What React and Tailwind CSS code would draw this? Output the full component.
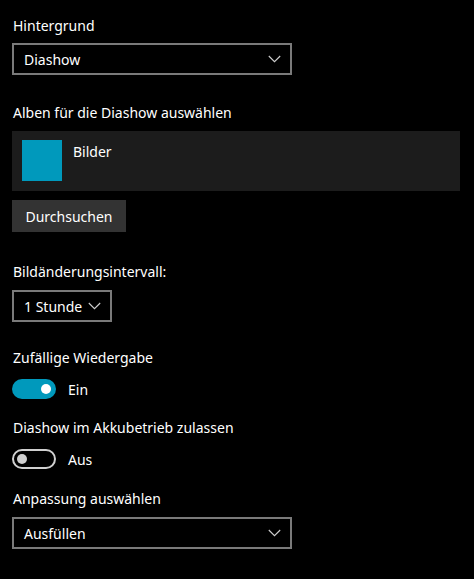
import React from 'react';

const Chevron = () => (
  <svg width="13" height="8" viewBox="0 0 13 8" fill="none" stroke="#cfcfcf" strokeWidth="1.1">
    <path d="M0.8 1l5.7 5.7L12.2 1" />
  </svg>
);

const Dropdown = ({ value, width }) => (
  <div className={`flex items-center justify-between h-[32px] border-2 border-[#7a7a7a] pl-[10px] pr-[9px] ${width}`}>
    <span className="text-[14px] text-white">{value}</span>
    <Chevron />
  </div>
);

const Toggle = ({ on, label }) => (
  <div className="flex items-center h-[20px]">
    {on ? (
      <div className="w-[44px] h-[20px] rounded-full bg-[#0099bc] flex items-center justify-end pr-[5px]">
        <div className="w-[10px] h-[10px] rounded-full bg-white" />
      </div>
    ) : (
      <div className="w-[44px] h-[20px] rounded-full border-2 border-[#d0d0d0] flex items-center pl-[3px]">
        <div className="w-[10px] h-[10px] rounded-full bg-[#d0d0d0]" />
      </div>
    )}
    <span className="ml-[12px] text-[14px] text-white">{label}</span>
  </div>
);

export default function App() {
  return (
    <div
      className="w-[474px] h-[579px] bg-black text-white px-[12px] pt-[16px] overflow-hidden"
      style={{ fontFamily: '"Noto Sans", "Open Sans", sans-serif' }}
    >
      <div className="text-[14px] leading-[20px] pl-[1px]">Hintergrund</div>
      <div className="mt-[7px]">
        <Dropdown value="Diashow" width="w-[280px]" />
      </div>

      <div className="mt-[28px] text-[14px] leading-[20px] pl-[1px]">Alben für die Diashow auswählen</div>
      <div className="mt-[8px] h-[60px] w-[448px] bg-[#1c1c1c] flex items-start pl-[10px] pt-[9px]">
        <div className="w-[40px] h-[41px] bg-[#0099bc]" />
        <span className="ml-[11px] text-[14px] leading-[20px] mt-[2px]">Bilder</span>
      </div>
      <button className="mt-[9px] h-[32px] w-[114px] bg-[#333333] text-[14px] text-white flex items-center justify-center">
        Durchsuchen
      </button>

      <div className="mt-[30px] text-[14px] leading-[20px] pl-[1px]">Bildänderungsintervall:</div>
      <div className="mt-[8px]">
        <Dropdown value="1 Stunde" width="w-[100px]" />
      </div>

      <div className="mt-[26px] text-[14px] leading-[20px] pl-[1px]">Zufällige Wiedergabe</div>
      <div className="mt-[11px]">
        <Toggle on label="Ein" />
      </div>

      <div className="mt-[19px] text-[14px] leading-[20px] pl-[1px]">Diashow im Akkubetrieb zulassen</div>
      <div className="mt-[11px]">
        <Toggle on={false} label="Aus" />
      </div>

      <div className="mt-[20px] text-[14px] leading-[20px] pl-[1px]">Anpassung auswählen</div>
      <div className="mt-[8px]">
        <Dropdown value="Ausfüllen" width="w-[280px]" />
      </div>
    </div>
  );
}
